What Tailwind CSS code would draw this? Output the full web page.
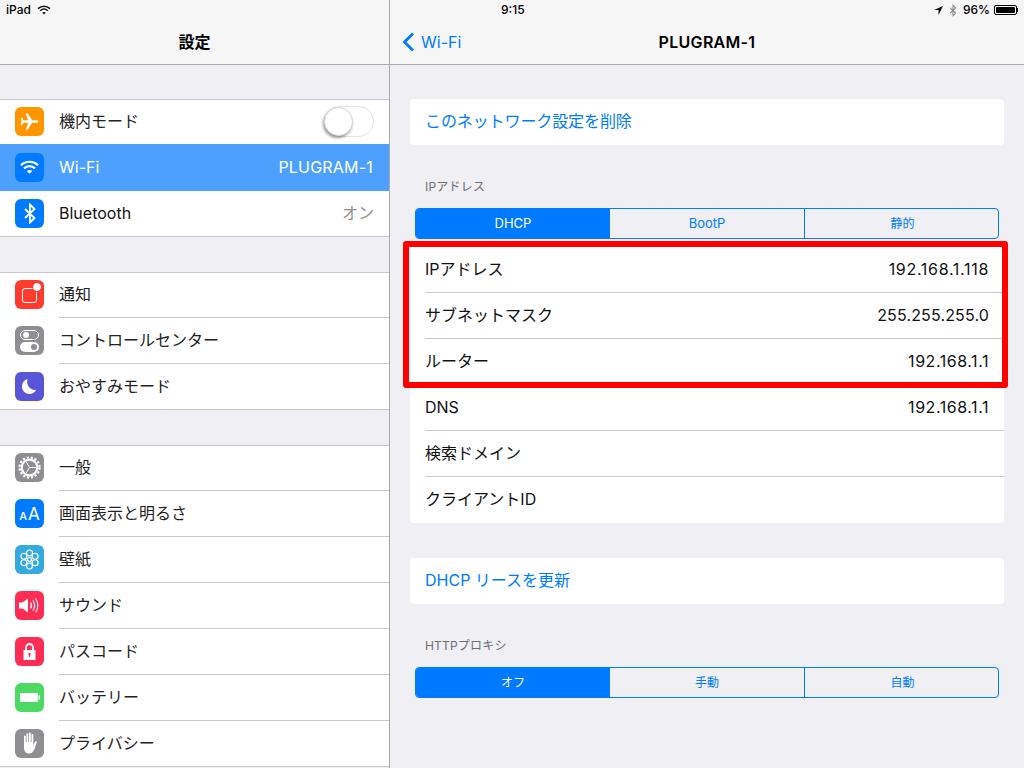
<!DOCTYPE html>
<html lang="ja">
<head>
  <meta charset="UTF-8" />
  <title>設定</title>
  <script src="https://cdn.jsdelivr.net/npm/@tailwindcss/browser@4"></script>
</head>
<body class="w-[1024px] h-[768px] overflow-hidden relative flex bg-[#efeff4] text-black font-['Inter','Noto_Sans_CJK_JP',sans-serif]">

<!-- Master column -->
<div class="w-[390px] h-[768px] border-r border-[#a9a9ad] shrink-0 overflow-hidden">
  <div class="h-[65px] bg-[#f6f6f7] border-b border-[#a9a9ad] relative">
    <div class="flex items-center h-[20px] pl-[6px] gap-[6px] text-[12px] font-medium">
      <span>iPad</span>
      <svg width="14" height="10" viewBox="0 0 14 10" fill="none" stroke="#111" stroke-width="1.5"><path d="M1 3.6C4.5 .4 9.5 .4 13 3.6M3.2 5.7c2.2-1.9 5.4-1.9 7.6 0"/><path d="M5.2 7.6 7 9.4l1.8-1.8c-1-.9-2.6-.9-3.6 0z" fill="#111" stroke="none"/></svg>
    </div>
    <div class="text-center text-[16px] font-semibold leading-[24px] pt-[10px]">設定</div>
  </div>

  <!-- Group 1 -->
  <div class="mt-[34px] bg-white">
    <div class="h-[46px] flex items-start border-y border-[#c8c7cc] pl-[15px] pr-[15px]">
      <span class="mt-[7px] w-[29px] h-[29px] rounded-[6px] bg-[#ff9500] flex items-center justify-center shrink-0">
        <svg width="19" height="19" viewBox="0 0 24 24" fill="#fff"><path d="M23 12c0-1-1-1.600-2.200-1.600h-5.500L9.500 1.500H7.300l2.900 8.900H4.500L2.600 7.700H.8L2 12 .8 16.300h1.800l1.900-2.700h5.700l-2.900 8.900h2.200l5.800-8.900h5.500C22 13.600 23 13 23 12z"/></svg>
      </span>
      <span class="ml-[15px] h-full flex items-center pb-[2px] text-[16px] text-[#222]">機内モード</span>
      <span class="ml-auto mt-[6px] w-[50px] h-[31px] rounded-full border border-[#e3e3e5] bg-white relative">
        <span class="absolute -left-px top-0 w-[29px] h-[29px] rounded-full bg-white border border-[#d5d5d5] shadow-[-1px_2px_3px_rgba(0,0,0,0.4)]"></span>
      </span>
    </div>
    <div class="h-[47px] -mt-px relative flex items-start bg-[#4ea0ff] pl-[15px] pr-[16px] text-white">
      <span class="mt-[9px] w-[29px] h-[29px] rounded-[6px] bg-[#007aff] flex items-center justify-center shrink-0">
        <svg width="19" height="15" viewBox="0 0 19 15" fill="none" stroke="#fff" stroke-width="2.200"><path d="M1 5.200C5.800.6 13.200.6 18 5.200M4 8.400c3.200-3 7.800-3 11 0"/><path d="M6.800 11 9.500 13.800 12.200 11c-1.500-1.400-3.900-1.400-5.400 0z" fill="#fff" stroke="none"/></svg>
      </span>
      <span class="ml-[15px] h-full flex items-center pb-[2px] text-[16px]">Wi-Fi</span>
      <span class="ml-auto h-full flex items-center pb-[2px] text-[16px] tracking-[0.2px]">PLUGRAM-1</span>
    </div>
    <div class="h-[46px] flex items-start border-b border-[#c8c7cc] pl-[15px] pr-[15px]">
      <span class="mt-[8px] w-[29px] h-[29px] rounded-[6px] bg-[#007aff] flex items-center justify-center shrink-0">
        <svg width="14" height="21" viewBox="0 0 14 21" fill="none" stroke="#fff" stroke-width="1.800"><path d="M2 6l9.500 9L7 19.500V1.500L11.500 6 2 15"/></svg>
      </span>
      <span class="ml-[15px] h-full flex items-center pb-[2px] text-[16px] text-[#111]">Bluetooth</span>
      <span class="ml-auto h-full flex items-center pb-[2px] text-[16px] text-[#8e8e93]">オン</span>
    </div>
  </div>

  <!-- Group 2 -->
  <div class="mt-[35px] bg-white">
    <div class="h-[46px] flex items-start border-t border-[#c8c7cc] pl-[15px]">
      <span class="mt-[7px] w-[29px] h-[29px] rounded-[6px] bg-[#ff3b30] flex items-center justify-center shrink-0 relative">
        <span class="w-[15px] h-[15px] border border-white rounded-[3px] mt-[1px]"></span>
        <span class="absolute right-[3px] top-[3px] w-[8px] h-[8px] rounded-full bg-white outline-[1.500px] outline-[#ff3b30]"></span>
      </span>
      <span class="ml-[15px] flex-1 h-full border-b border-[#c8c7cc] flex items-center pb-[2px] text-[16px] text-[#222]">通知</span>
    </div>
    <div class="h-[46px] flex items-start pl-[15px]">
      <span class="mt-[8px] w-[29px] h-[29px] rounded-[6px] bg-[#8e8e93] flex flex-col items-center justify-center gap-[2px] shrink-0">
        <span class="w-[19px] h-[10px] rounded-full border border-white flex items-center pl-[1.500px]"><span class="w-[6px] h-[6px] rounded-full bg-white"></span></span>
        <span class="w-[19px] h-[10px] rounded-full bg-white flex items-center justify-end pr-[2px]"><span class="w-[6px] h-[6px] rounded-full bg-[#8e8e93]"></span></span>
      </span>
      <span class="ml-[15px] flex-1 h-full border-b border-[#c8c7cc] flex items-center pb-[1px] text-[16px] text-[#222]">コントロールセンター</span>
    </div>
    <div class="h-[46px] flex items-start border-b border-[#c8c7cc] pl-[15px]">
      <span class="mt-[8px] w-[29px] h-[29px] rounded-[6px] bg-[#5856d6] flex items-center justify-center shrink-0">
        <svg width="17" height="17" viewBox="0 0 17 17" fill="#fff"><path d="M6.500 1C3.200 2 1 5 1 8.500 1 12.600 4.400 16 8.500 16c2.900 0 5.500-1.700 6.700-4.200-5.300 1-10.500-4.500-8.700-10.800z"/></svg>
      </span>
      <span class="ml-[15px] h-full flex items-center pb-[2px] text-[16px] text-[#222]">おやすみモード</span>
    </div>
  </div>

  <!-- Group 3 -->
  <div class="mt-[35px] bg-white">
    <div class="h-[46px] flex items-start border-t border-[#c8c7cc] pl-[15px]">
      <span class="mt-[7px] w-[29px] h-[29px] rounded-[6px] bg-[#8e8e93] flex items-center justify-center shrink-0">
        <svg width="25" height="25" viewBox="0 0 25 25" fill="none" stroke="#fff"><circle cx="12.500" cy="12.500" r="10" stroke-width="2.200" stroke-dasharray="2.200 1.800"/><circle cx="12.500" cy="12.500" r="7.800" stroke-width="2.200"/><path d="M12.500 12.500H19M12.500 12.500 9.200 6.900M12.500 12.500 9.200 18.100" stroke-width="1"/></svg>
      </span>
      <span class="ml-[15px] flex-1 h-full border-b border-[#c8c7cc] flex items-center pb-[2px] text-[16px] text-[#222]">一般</span>
    </div>
    <div class="h-[46px] flex items-start pl-[15px]">
      <span class="mt-[8px] w-[29px] h-[29px] rounded-[6px] bg-[#007aff] flex items-end justify-center gap-[1px] pb-[6px] shrink-0 text-white leading-none font-medium">
        <span class="text-[11px]">A</span><span class="text-[17px] font-normal -mb-[1px]">A</span>
      </span>
      <span class="ml-[15px] flex-1 h-full border-b border-[#c8c7cc] flex items-center pb-[1px] text-[16px] text-[#222]">画面表示と明るさ</span>
    </div>
    <div class="h-[46px] flex items-start pl-[15px]">
      <span class="mt-[8px] w-[29px] h-[29px] rounded-[6px] bg-[#35aadf] flex items-center justify-center shrink-0">
        <svg width="21" height="21" viewBox="0 0 21 21" fill="none" stroke="#fff" stroke-width="1.200"><circle cx="10.500" cy="10.500" r="2"/><circle cx="10.500" cy="4" r="3"/><circle cx="10.500" cy="17" r="3"/><circle cx="4.900" cy="7.250" r="3"/><circle cx="16.100" cy="7.250" r="3"/><circle cx="4.900" cy="13.750" r="3"/><circle cx="16.100" cy="13.750" r="3"/></svg>
      </span>
      <span class="ml-[15px] flex-1 h-full border-b border-[#c8c7cc] flex items-center pb-[1px] text-[16px] text-[#222]">壁紙</span>
    </div>
    <div class="h-[46px] flex items-start pl-[15px]">
      <span class="mt-[8px] w-[29px] h-[29px] rounded-[6px] bg-[#ff2d55] flex items-center justify-center shrink-0">
        <svg width="23" height="17" viewBox="0 0 23 17" fill="none" stroke="#fff" stroke-width="1.200"><path d="M1 5.500h3.500L10 1.500v14l-5.500-4H1z" fill="#fff" stroke="none"/><path d="M12.500 5.500c1.200 1.800 1.200 4.200 0 6M15 3.500c2 3 2 7 0 10M17.500 1.500c3 4.200 3 9.800 0 14"/></svg>
      </span>
      <span class="ml-[15px] flex-1 h-full border-b border-[#c8c7cc] flex items-center pb-[1px] text-[16px] text-[#222]">サウンド</span>
    </div>
    <div class="h-[46px] flex items-start pl-[15px]">
      <span class="mt-[8px] w-[29px] h-[29px] rounded-[6px] bg-[#ff2d55] flex items-center justify-center shrink-0">
        <svg width="15" height="19" viewBox="0 0 15 19" fill="none"><path d="M4 8V5.500a3.500 3.500 0 0 1 7 0V8" stroke="#fff" stroke-width="1.800"/><path d="M1.500 8h12v10h-12z" fill="#fff"/><path d="M7.500 11.500v3.500" stroke="#ff2d55" stroke-width="1.200"/><circle cx="7.500" cy="12" r="1.200" fill="#ff2d55"/></svg>
      </span>
      <span class="ml-[15px] flex-1 h-full border-b border-[#c8c7cc] flex items-center pb-[1px] text-[16px] text-[#222]">パスコード</span>
    </div>
    <div class="h-[46px] flex items-start pl-[15px]">
      <span class="mt-[8px] w-[29px] h-[29px] rounded-[6px] bg-[#4cd964] flex items-center justify-center shrink-0">
        <svg width="20" height="9" viewBox="0 0 20 9" fill="#fff"><rect x="0" y="0" width="18" height="9" rx="1"/><rect x="18.500" y="2.500" width="1.500" height="4"/></svg>
      </span>
      <span class="ml-[15px] flex-1 h-full border-b border-[#c8c7cc] flex items-center pb-[1px] text-[16px] text-[#222]">バッテリー</span>
    </div>
    <div class="h-[46px] flex items-start border-b border-[#c8c7cc] pl-[15px]">
      <span class="mt-[8px] w-[29px] h-[29px] rounded-[6px] bg-[#8e8e93] flex items-center justify-center shrink-0">
        <svg width="19" height="23" viewBox="0 0 19 23" fill="#fff"><path d="M4 12V4.500c0-1.300 1.800-1.300 1.800 0V10h.7V2.200c0-1.300 1.800-1.300 1.800 0V10h.7V1.500c0-1.300 1.800-1.300 1.800 0V10h.7V3c0-1.300 1.800-1.300 1.800 0v11c0-.3 1-3.500 2-4.500.9-.8 2 0 1.500 1-.8 1.600-1.500 4.500-2.500 7-1 2.500-3 4-5.500 4C6 21.500 4 19 4 16z"/></svg>
      </span>
      <span class="ml-[15px] h-full flex items-center pb-[1px] text-[16px] text-[#222]">プライバシー</span>
    </div>
  </div>
</div>

<!-- Detail column -->
<div class="flex-1 h-[768px]">
  <div class="h-[65px] bg-[#f6f6f7] border-b border-[#a9a9ad] relative">
    <div class="flex items-center h-[20px] text-[12px] font-medium pr-[6px]">
      <span class="ml-[111px] mr-auto">9:15</span>
      <svg width="9" height="9" viewBox="0 0 10 10" fill="#111"><path d="M10 0 0 4.500h5V10z"/></svg>
      <svg class="ml-[6px]" width="8" height="13" viewBox="0 0 14 21" fill="none" stroke="#888" stroke-width="1.800"><path d="M2 6l9.500 9L7 19.500V1.500L11.500 6 2 15"/></svg>
      <span class="ml-[6px]">96%</span>
      <span class="ml-[4px] flex items-center">
        <span class="w-[23px] h-[10px] border border-black rounded-[2px] p-px flex"><span class="w-[19px] bg-black rounded-[1px]"></span></span>
        <span class="w-[1px] h-[4px] bg-black"></span>
      </span>
    </div>
    <div class="relative h-[44px] flex items-center justify-center">
      <div class="absolute left-[12px] top-[10px] flex items-center gap-[6px] text-[#007aff] text-[16px]">
        <svg width="13" height="20" viewBox="0 0 13 20" fill="none" stroke="#007aff" stroke-width="2.800"><path d="M11 1.500 2.500 10l8.500 8.500"/></svg>
        <span>Wi-Fi</span>
      </div>
      <span class="text-[16px] font-semibold -mt-[1px] tracking-[0.3px]">PLUGRAM-1</span>
    </div>
  </div>

  <div class="pl-[20px] pr-[20px]">
    <div class="mt-[34px] h-[46px] bg-white rounded-[4px] pl-[15px] pb-[2px] flex items-center text-[16px] tracking-[-0.1px] text-[#007aff]">このネットワーク設定を削除</div>

    <div class="mt-[34px] pl-[15px] text-[12px] tracking-[0.2px] leading-[16px] text-[#6d6d72]">IPアドレス</div>
    <div class="mt-[13px] mx-[5px] h-[31px] grid grid-cols-[194px_195px_1fr] border border-[#007aff] rounded-[4px] overflow-hidden text-[12px] text-[#007aff] text-center leading-[29px]">
      <div class="bg-[#007aff] text-white text-[13px]">DHCP</div>
      <div class="border-r border-[#007aff] text-[13px]">BootP</div>
      <div class="pl-[2px]">静的</div>
    </div>

    <div class="mt-[8px] bg-white rounded-[4px] text-[16px] text-[#111]">
      <div class="ml-[15px] pr-[15px] pb-[2px] h-[46px] flex items-center justify-between border-b border-[#c8c7cc]"><span>IPアドレス</span><span class="tracking-[0.7px]">192.168.1.118</span></div>
      <div class="ml-[15px] pr-[15px] pb-[2px] h-[46px] flex items-center justify-between border-b border-[#c8c7cc]"><span>サブネットマスク</span><span class="tracking-[0.15px]">255.255.255.0</span></div>
      <div class="ml-[15px] pr-[15px] pb-[2px] h-[46px] flex items-center justify-between border-b border-[#c8c7cc]"><span>ルーター</span><span class="tracking-[0.55px]">192.168.1.1</span></div>
      <div class="ml-[15px] pr-[15px] pb-[2px] h-[46px] flex items-center justify-between border-b border-[#c8c7cc]"><span>DNS</span><span class="tracking-[0.55px]">192.168.1.1</span></div>
      <div class="ml-[15px] pr-[15px] pb-[2px] h-[46px] flex items-center border-b border-[#c8c7cc]"><span>検索ドメイン</span></div>
      <div class="ml-[15px] pr-[15px] pb-[2px] h-[46px] flex items-center"><span>クライアントID</span></div>
    </div>

    <div class="mt-[35px] h-[46px] bg-white rounded-[4px] px-[15px] pb-[2px] flex items-center text-[16px] text-[#007aff]">DHCP リースを更新</div>

    <div class="mt-[34px] pl-[15px] text-[12px] tracking-[0.2px] leading-[16px] text-[#6d6d72]">HTTPプロキシ</div>
    <div class="mt-[13px] mx-[5px] h-[31px] grid grid-cols-[194px_195px_1fr] border border-[#007aff] rounded-[4px] overflow-hidden text-[12px] text-[#007aff] text-center leading-[29px]">
      <div class="bg-[#007aff] text-white">オフ</div>
      <div class="border-r border-[#007aff]">手動</div>
      <div class="pl-[2px]">自動</div>
    </div>
  </div>
</div>

<!-- red highlight drawn over the screenshot -->
<div class="absolute left-[403px] top-[241px] w-[605px] h-[147px] border-[6px] border-[#ff0000] rounded-[3px]"></div>

</body>
</html>
